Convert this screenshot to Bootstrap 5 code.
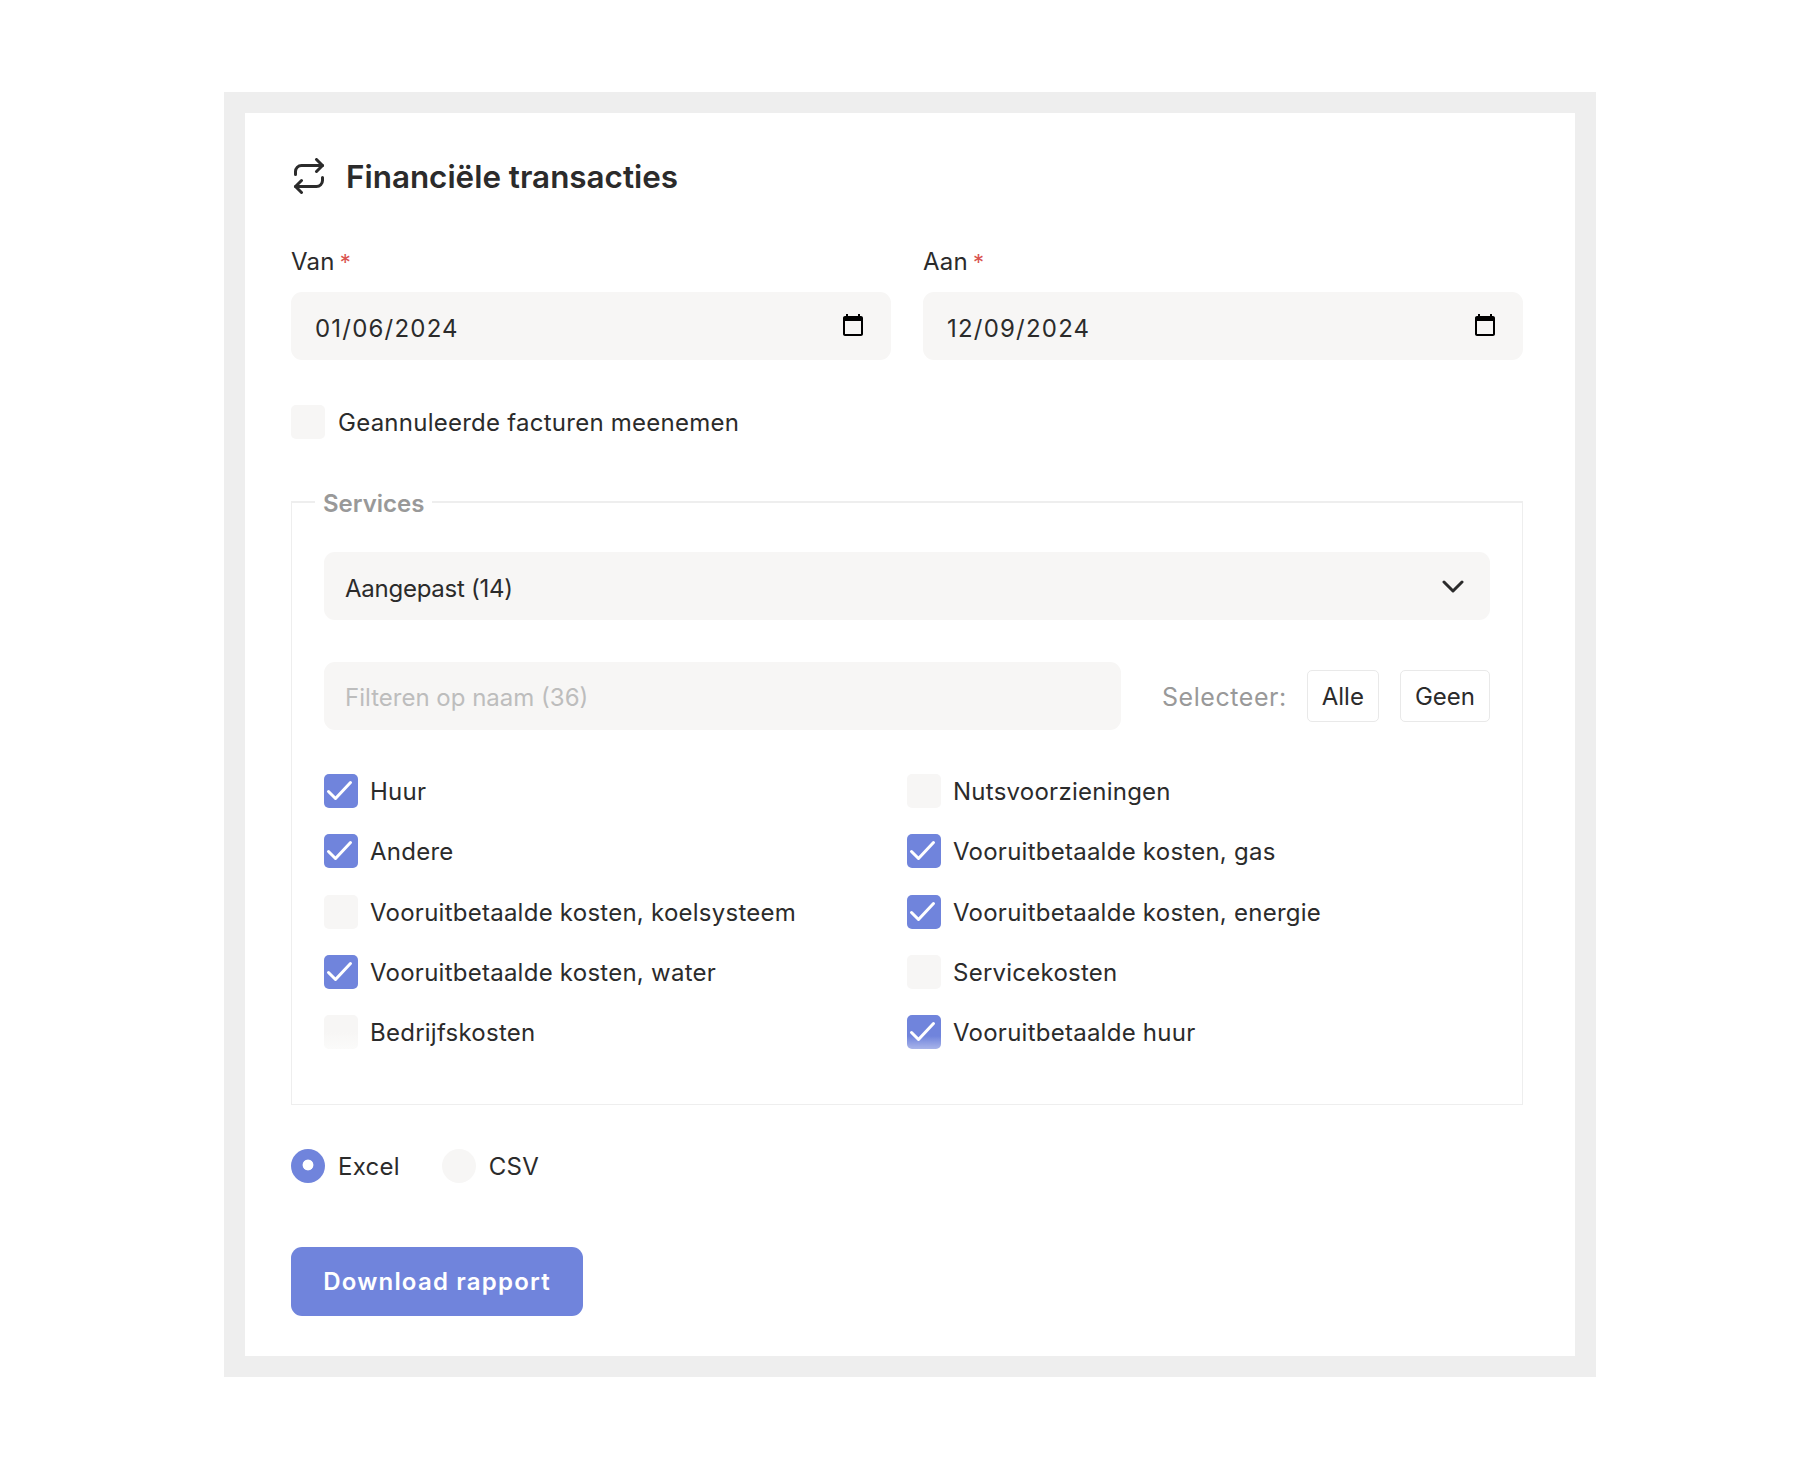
<!DOCTYPE html>
<html lang="nl">
<head>
<meta charset="utf-8">
<title>Financiële transacties</title>
<link href="https://cdn.jsdelivr.net/npm/bootstrap@5.3.0/dist/css/bootstrap.min.css" rel="stylesheet">
<style>
body{font-family:"Inter","Liberation Sans",sans-serif;color:#2b2b2b;background:#fff;font-size:24px;}
.frame{width:1372px;margin:92px 0 90px 224px;border:21px solid #eee;background:#fff;padding:44px 52px 40px 46px;}
.title-row{height:40px;margin-bottom:47px;gap:19px;}
.title-row svg{margin-top:-3px;}
.title-row h2{font-size:31.4px;font-weight:600;line-height:40px;margin:0;color:#2b2b2b;}
.field-label{font-size:24px;line-height:36px;margin-bottom:12px;display:block;letter-spacing:.25px;}
.req{color:#d9534f;font-size:22px;margin-left:-2px;}
.form-control.soft,.form-select.soft{height:68px;background-color:#f7f6f5;border:0;border-radius:11px;font-size:24px;color:#2b2b2b;padding:0 23px;box-shadow:none;}
.form-select.soft{--bs-form-select-bg-img:url("data:image/svg+xml,%3csvg xmlns='http://www.w3.org/2000/svg' viewBox='0 0 24 14'%3e%3cpath fill='none' stroke='%232b2b2b' stroke-width='3' stroke-linecap='round' stroke-linejoin='round' d='M3 3l9 9 9-9'/%3e%3c/svg%3e");background-size:24px 14px;background-position:right 25px center;padding-left:21px;padding-top:5px;letter-spacing:-.25px;}
.form-control.soft::placeholder{color:#bdbdbd;opacity:1;}
.form-control.soft.filter-box{padding-left:21px;padding-top:2px;}
input[type=date].soft{letter-spacing:1.2px;padding-top:5px;padding-left:24px;padding-right:25px;}
input[type=date].soft::-webkit-calendar-picker-indicator{width:26px;height:26px;padding:0;margin:-5px 0 0 0;opacity:1;}
.dates{--bs-gutter-x:32px;margin-bottom:45px;}
.tick{display:flex;align-items:center;gap:13px;padding:0;margin:0;height:34px;min-height:34px;}
.check-rows .tick{gap:12px;}
.form-check-input.tick-box{width:34px;height:34px;margin:0;flex:none;float:none;background-color:#f7f6f5;border:0;border-radius:5px;box-shadow:none;}
.form-check-input.tick-box:checked{background-color:#7084dc;background-image:url("data:image/svg+xml,%3csvg xmlns='http://www.w3.org/2000/svg' viewBox='0 0 34 34'%3e%3cpath fill='none' stroke='%23fff' stroke-width='3' stroke-linecap='round' stroke-linejoin='round' d='M4.5 17.5l7 7L26.5 8.5'/%3e%3c/svg%3e");background-size:34px 34px;}
.form-check-input.tick-box.fade-on:checked{background-image:url("data:image/svg+xml,%3csvg xmlns='http://www.w3.org/2000/svg' viewBox='0 0 34 34'%3e%3cpath fill='none' stroke='%23fff' stroke-width='3' stroke-linecap='round' stroke-linejoin='round' d='M4.5 17.5l7 7L26.5 8.5'/%3e%3c/svg%3e"),linear-gradient(#7084dc 62%,#a9b5ea 100%);}
.form-check-input.tick-box.fade-off{background-image:linear-gradient(#f7f6f5 50%,#fbfbfa 100%);}
.form-check-input.radio-dot{width:34px;height:34px;margin:0;flex:none;float:none;background-color:#f7f6f5;border:0;box-shadow:none;}
.form-check-input.radio-dot:checked{background-color:#7084dc;background-image:radial-gradient(circle at 50% 47%,#fff 0,#fff 5px,transparent 5.8px);background-size:auto;}
.tick .form-check-label{font-size:24px;line-height:34px;letter-spacing:.25px;padding-top:2px;}
.services{border:1px solid #eeeeee;border-top-width:2px;margin:46px 0 44px;padding:33px 32px 55px 32px;border-radius:0;}
.services legend{float:none;width:auto;font-size:24px;font-weight:600;line-height:30px;color:#999;margin:0 0 0 -9px;padding:4px 8px 0;}
.filter-row{margin-top:42px;margin-bottom:44px;height:68px;}
.select-word{color:#999;font-size:25px;letter-spacing:.55px;margin-left:41px;margin-right:20px;white-space:nowrap;padding-top:4px;}
.btn.mini{height:52px;background:#fff;border:1px solid #e9e9e9;border-radius:5px;font-size:24px;color:#2b2b2b;padding:2px 14px 0;line-height:1;}
.btn.mini + .btn.mini{margin-left:21px;}
.check-rows>div{margin-bottom:26.25px;}
.check-rows>div:nth-last-child(-n+2){margin-bottom:0;}
.radios{gap:42px;margin-bottom:64px;}
.btn.go{height:69px;width:292px;background:#7084dc;border:0;border-radius:11px;color:#fff;font-size:24px;font-weight:600;letter-spacing:1.2px;padding:0;}
</style>
</head>
<body>
<div class="frame">
  <div class="title-row d-flex align-items-center">
    <svg width="36" height="36" viewBox="0 0 24 24" fill="none" stroke="#2b2b2b" stroke-width="2" stroke-linecap="round" stroke-linejoin="round" aria-hidden="true"><polyline points="17 1 21 5 17 9"/><path d="M3 11V9a4 4 0 0 1 4-4h14"/><polyline points="7 23 3 19 7 15"/><path d="M21 13v2a4 4 0 0 1-4 4H3"/></svg>
    <h2>Financiële transacties</h2>
  </div>
  <div class="row dates">
    <div class="col-6">
      <label class="field-label" for="van">Van <span class="req">*</span></label>
      <input id="van" type="date" class="form-control soft" value="2024-01-06">
    </div>
    <div class="col-6">
      <label class="field-label" for="aan">Aan <span class="req">*</span></label>
      <input id="aan" type="date" class="form-control soft" value="2024-12-09">
    </div>
  </div>
  <div class="form-check tick">
    <input class="form-check-input tick-box" type="checkbox" id="c0">
    <label class="form-check-label" for="c0">Geannuleerde facturen meenemen</label>
  </div>
  <fieldset class="services">
    <legend>Services</legend>
    <select class="form-select soft" aria-label="Services"><option>Aangepast (14)</option></select>
    <div class="filter-row d-flex align-items-center">
      <input type="text" class="form-control soft filter-box flex-grow-1" placeholder="Filteren op naam (36)">
      <span class="select-word">Selecteer:</span>
      <button type="button" class="btn mini">Alle</button>
      <button type="button" class="btn mini">Geen</button>
    </div>
    <div class="row g-0 check-rows">
      <div class="col-6"><div class="form-check tick"><input class="form-check-input tick-box" type="checkbox" checked id="c1"><label class="form-check-label" for="c1">Huur</label></div></div>
      <div class="col-6"><div class="form-check tick"><input class="form-check-input tick-box" type="checkbox" id="c2"><label class="form-check-label" for="c2">Nutsvoorzieningen</label></div></div>
      <div class="col-6"><div class="form-check tick"><input class="form-check-input tick-box" type="checkbox" checked id="c3"><label class="form-check-label" for="c3">Andere</label></div></div>
      <div class="col-6"><div class="form-check tick"><input class="form-check-input tick-box" type="checkbox" checked id="c4"><label class="form-check-label" for="c4">Vooruitbetaalde kosten, gas</label></div></div>
      <div class="col-6"><div class="form-check tick"><input class="form-check-input tick-box" type="checkbox" id="c5"><label class="form-check-label" for="c5">Vooruitbetaalde kosten, koelsysteem</label></div></div>
      <div class="col-6"><div class="form-check tick"><input class="form-check-input tick-box" type="checkbox" checked id="c6"><label class="form-check-label" for="c6">Vooruitbetaalde kosten, energie</label></div></div>
      <div class="col-6"><div class="form-check tick"><input class="form-check-input tick-box" type="checkbox" checked id="c7"><label class="form-check-label" for="c7">Vooruitbetaalde kosten, water</label></div></div>
      <div class="col-6"><div class="form-check tick"><input class="form-check-input tick-box" type="checkbox" id="c8"><label class="form-check-label" for="c8">Servicekosten</label></div></div>
      <div class="col-6"><div class="form-check tick"><input class="form-check-input tick-box fade-off" type="checkbox" id="c9"><label class="form-check-label" for="c9">Bedrijfskosten</label></div></div>
      <div class="col-6"><div class="form-check tick"><input class="form-check-input tick-box fade-on" type="checkbox" checked id="c10"><label class="form-check-label" for="c10">Vooruitbetaalde huur</label></div></div>
    </div>
  </fieldset>
  <div class="d-flex radios">
    <div class="form-check tick"><input class="form-check-input radio-dot" type="radio" name="fmt" id="r1" checked><label class="form-check-label" for="r1">Excel</label></div>
    <div class="form-check tick"><input class="form-check-input radio-dot" type="radio" name="fmt" id="r2"><label class="form-check-label" for="r2">CSV</label></div>
  </div>
  <button type="button" class="btn go">Download rapport</button>
</div>
<script src="https://cdn.jsdelivr.net/npm/bootstrap@5.3.0/dist/js/bootstrap.bundle.min.js"></script>
</body>
</html>
